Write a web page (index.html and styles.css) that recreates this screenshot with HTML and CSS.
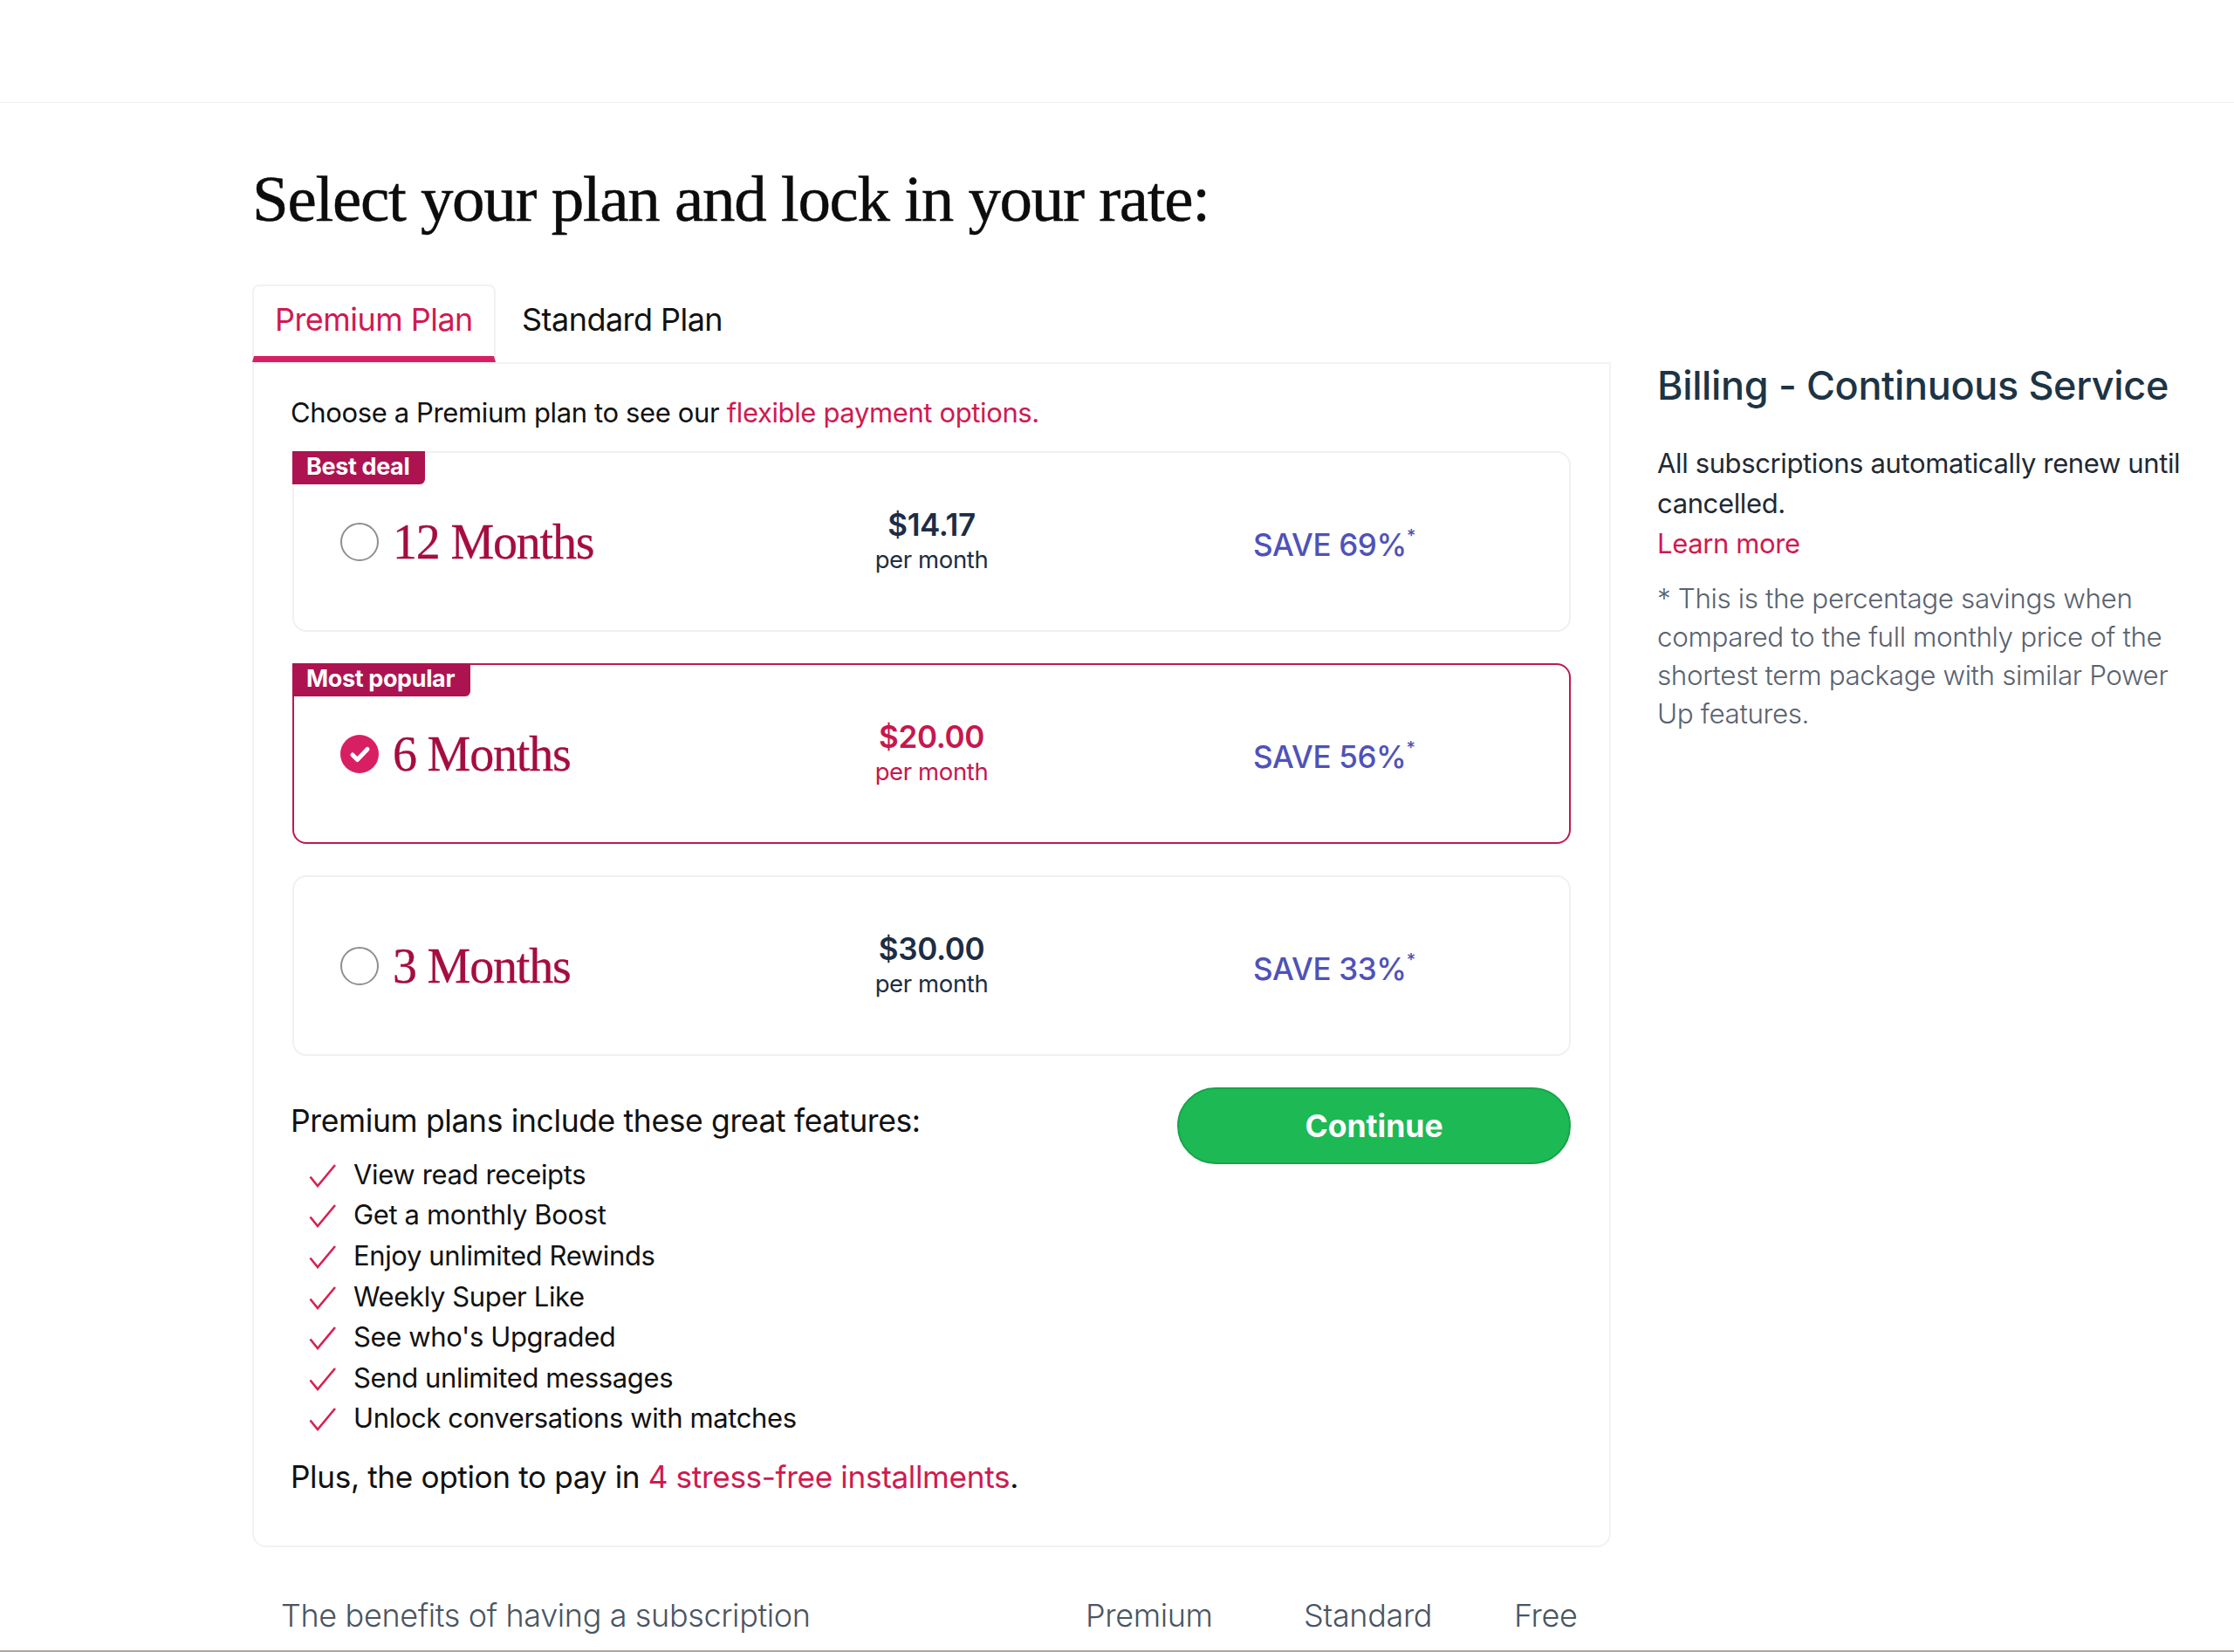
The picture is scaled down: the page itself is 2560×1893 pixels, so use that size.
FILE: index.html
```html
<!DOCTYPE html>
<html lang="en">
<head>
  <meta charset="UTF-8">
  <meta name="viewport" content="width=device-width, initial-scale=1.0">
  <title>Select your plan</title>
  <link rel="stylesheet" href="styles.css">
</head>
<body>
  <header class="top-bar"></header>

  <main class="page">
    <section class="plans">
      <h1>Select your plan and lock in your rate:</h1>

      <div class="tabs">
        <div class="tab active">Premium Plan</div>
        <div class="tab">Standard Plan</div>
      </div>

      <div class="panel">
        <p class="intro">Choose a Premium plan to see our <a href="#">flexible payment options.</a></p>

        <div class="card">
          <span class="badge">Best deal</span>
          <div class="term"><span class="radio"></span><span class="term-name">12 Months</span></div>
          <div class="price"><strong>$14.17</strong><span>per month</span></div>
          <div class="save">SAVE 69%<sup>*</sup></div>
        </div>

        <div class="card selected">
          <span class="badge">Most popular</span>
          <div class="term">
            <span class="radio">
              <svg viewBox="0 0 44 44"><path d="M14 23l5.5 5.5L31 16.5" fill="none" stroke="#fff" stroke-width="5" stroke-linecap="round" stroke-linejoin="round"/></svg>
            </span>
            <span class="term-name">6 Months</span>
          </div>
          <div class="price"><strong>$20.00</strong><span>per month</span></div>
          <div class="save">SAVE 56%<sup>*</sup></div>
        </div>

        <div class="card">
          <div class="term"><span class="radio"></span><span class="term-name">3 Months</span></div>
          <div class="price"><strong>$30.00</strong><span>per month</span></div>
          <div class="save">SAVE 33%<sup>*</sup></div>
        </div>

        <div class="features">
          <div>
            <h2>Premium plans include these great features:</h2>
            <ul>
              <li><svg viewBox="0 0 32 28"><path d="M1.5 15.5L10 26L30 2" fill="none" stroke="#d81f50" stroke-width="2.6"/></svg>View read receipts</li>
              <li><svg viewBox="0 0 32 28"><path d="M1.5 15.5L10 26L30 2" fill="none" stroke="#d81f50" stroke-width="2.6"/></svg>Get a monthly Boost</li>
              <li><svg viewBox="0 0 32 28"><path d="M1.5 15.5L10 26L30 2" fill="none" stroke="#d81f50" stroke-width="2.6"/></svg>Enjoy unlimited Rewinds</li>
              <li><svg viewBox="0 0 32 28"><path d="M1.5 15.5L10 26L30 2" fill="none" stroke="#d81f50" stroke-width="2.6"/></svg>Weekly Super Like</li>
              <li><svg viewBox="0 0 32 28"><path d="M1.5 15.5L10 26L30 2" fill="none" stroke="#d81f50" stroke-width="2.6"/></svg>See who's Upgraded</li>
              <li><svg viewBox="0 0 32 28"><path d="M1.5 15.5L10 26L30 2" fill="none" stroke="#d81f50" stroke-width="2.6"/></svg>Send unlimited messages</li>
              <li><svg viewBox="0 0 32 28"><path d="M1.5 15.5L10 26L30 2" fill="none" stroke="#d81f50" stroke-width="2.6"/></svg>Unlock conversations with matches</li>
            </ul>
          </div>
          <button class="continue">Continue</button>
        </div>

        <p class="plus">Plus, the option to pay in <a href="#">4 stress-free installments</a>.</p>
      </div>

      <div class="benefits">
        <span>The benefits of having a subscription</span>
        <span>Premium</span>
        <span>Standard</span>
        <span>Free</span>
      </div>
    </section>

    <aside class="billing">
      <h3>Billing - Continuous Service</h3>
      <p>All subscriptions automatically renew until cancelled.<br><a href="#">Learn more</a></p>
      <p class="note">* This is the percentage savings when compared to the full monthly price of the shortest term package with similar Power Up features.</p>
    </aside>
  </main>

  <div class="bottom-line"></div>
</body>
</html>
```

FILE: styles.css
```css
* {
  box-sizing: border-box;
  margin: 0;
  padding: 0;
}

html,
body {
  height: 100%;
}

body {
  display: flex;
  flex-direction: column;
  overflow: hidden;
  background: #fff;
  color: #111;
  font-family: Inter, "Liberation Sans", sans-serif;
  font-size: 31px;
  letter-spacing: -0.012em;
}

a {
  color: #d01a50;
  text-decoration: none;
}

.top-bar {
  height: 118px;
  flex: none;
  border-bottom: 1px solid #f1f1f1;
}

.page {
  flex: 1;
  display: flex;
  min-height: 0;
  padding: 66px 0 0 289px;
}

.plans {
  width: 1557px;
  flex: none;
}

h1 {
  font-family: "Liberation Serif", serif;
  font-size: 75px;
  font-weight: 400;
  line-height: 88px;
  letter-spacing: -1.3px;
  -webkit-text-stroke: 0.5px #0c0c0c;
  color: #0c0c0c;
  margin-bottom: 54px;
}

.tabs {
  display: flex;
  height: 89px;
}

.tab {
  padding: 0 24px;
  line-height: 80px;
  font-size: 36px;
  letter-spacing: -0.015em;
  white-space: nowrap;
}

.tab.active {
  width: 279px;
  color: #d01a50;
  border: 2px solid #f2f2f2;
  border-bottom: 7px solid #d81f63;
  border-radius: 8px 8px 0 0;
  line-height: 76px;
}

.tab:not(.active) {
  padding-left: 30px;
}

.panel {
  border: 2px solid #f2f2f2;
  border-radius: 0 0 16px 16px;
  padding: 34px 44px 57px 42px;
  height: 1358px;
}

.intro {
  line-height: 44px;
  margin-bottom: 22px;
}

.card {
  position: relative;
  display: grid;
  grid-template-columns: 1fr 1fr 1fr;
  align-items: center;
  height: 207px;
  margin-bottom: 36px;
  margin-left: 2px;
  border: 2px solid #f0f0f0;
  border-radius: 16px;
}

.card.selected {
  border-color: #c2184f;
}

.badge {
  position: absolute;
  left: -2px;
  top: -2px;
  height: 38px;
  padding: 0 18px 0 16px;
  background: #ad1350;
  color: #fff;
  font-size: 27px;
  font-weight: 700;
  line-height: 36px;
  border-radius: 0 0 6px 0;
}

.term {
  display: flex;
  align-items: center;
  gap: 16px;
  padding-left: 53px;
}

.radio {
  width: 44px;
  height: 44px;
  border: 2px solid #8f8f8f;
  border-radius: 50%;
  flex: none;
}

.selected .radio {
  border: none;
  background: #d81f63;
}

.radio svg {
  display: block;
}

.term-name {
  font-family: "Liberation Serif", serif;
  font-size: 56px;
  letter-spacing: -1.2px;
  -webkit-text-stroke: 0.3px #a50d3f;
  color: #a50d3f;
}

.price {
  display: flex;
  flex-direction: column;
  align-items: center;
  padding-bottom: 4px;
  color: #1d2d44;
  font-size: 27.5px;
  line-height: 36px;
}

.price strong {
  font-size: 35px;
  font-weight: 600;
  line-height: 44px;
}

.selected .price {
  color: #c8174f;
}

.save {
  padding: 6px 0 0 125px;
  color: #4f52b8;
  font-size: 35px;
  font-weight: 500;
}

.save sup {
  font-size: 20px;
  line-height: 0;
  vertical-align: 16px;
}

.features {
  display: flex;
  justify-content: space-between;
  align-items: flex-start;
}

.features h2 {
  padding-top: 16px;
  margin-bottom: 14px;
  font-size: 35.5px;
  font-weight: 400;
  line-height: 46px;
}

.features ul {
  list-style: none;
}

.features li {
  display: flex;
  align-items: center;
  height: 46.6px;
  padding-left: 21px;
}

.features li svg {
  width: 32px;
  height: 28px;
  margin: 3px 19px 0 0;
  flex: none;
}

.continue {
  width: 451px;
  height: 88px;
  border: 2px solid #18a349;
  border-radius: 44px;
  background: #1db954;
  color: #fff;
  font-family: inherit;
  font-size: 35.5px;
  font-weight: 700;
}

.plus {
  margin-top: 21px;
  font-size: 35.2px;
  line-height: 46px;
}

.benefits {
  display: grid;
  grid-template-columns: 922px 250px 241px auto;
  margin-top: 56px;
  padding-left: 33px;
  color: #4a5563;
  font-size: 36px;
  font-weight: 300;
  line-height: 44px;
}

.billing {
  width: 612px;
  margin-left: 53px;
  padding-top: 232px;
}

.billing h3 {
  color: #1d3445;
  font-size: 45px;
  font-weight: 500;
  line-height: 52px;
  margin-bottom: 40px;
}

.billing p {
  line-height: 46px;
  color: #1f2933;
}

.billing .note {
  margin-top: 18px;
  color: #5a6270;
  font-size: 31.4px;
  font-weight: 300;
  line-height: 44px;
}

.bottom-line {
  height: 2px;
  flex: none;
  background: #aaa6a3;
}
```
